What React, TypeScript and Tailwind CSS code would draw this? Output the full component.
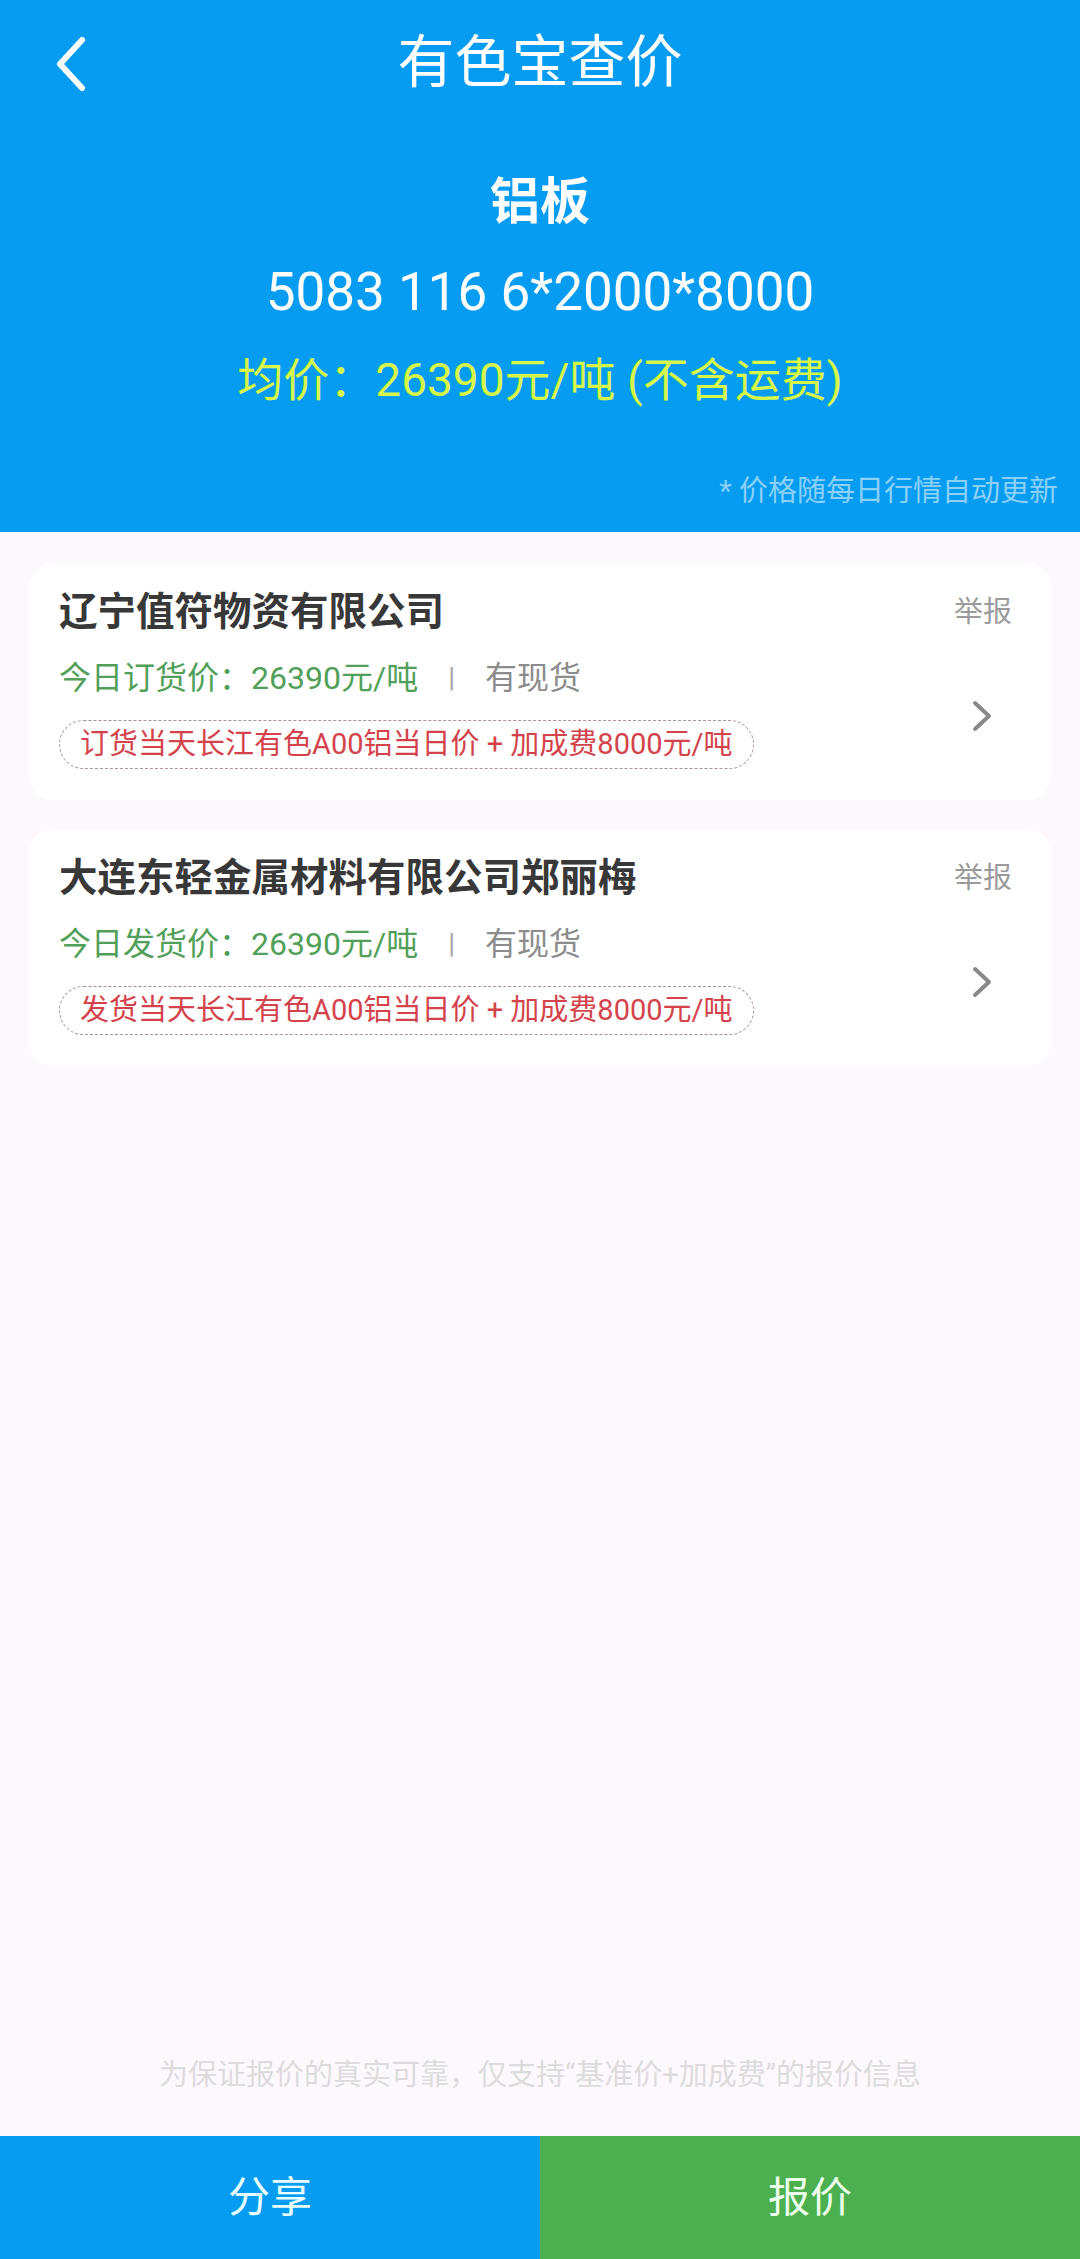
const FONT = "font-['Roboto','Noto_Sans_CJK_SC',sans-serif]";

type Offer = {
    id: number;
    company: string;
    priceLabel: string;
    price: string;
    stock: string;
    formula: string;
};

const offers: Offer[] = [
    {
        id: 1,
        company: "辽宁值符物资有限公司",
        priceLabel: "今日订货价：",
        price: "26390元/吨",
        stock: "有现货",
        formula: "订货当天长江有色A00铝当日价 + 加成费8000元/吨",
    },
    {
        id: 2,
        company: "大连东轻金属材料有限公司郑丽梅",
        priceLabel: "今日发货价：",
        price: "26390元/吨",
        stock: "有现货",
        formula: "发货当天长江有色A00铝当日价 + 加成费8000元/吨",
    },
];

const BackIcon = () => (
    <svg width="32" height="56" viewBox="0 0 32 56" fill="none">
        <path
            d="M27 4 L5 28 L27 52"
            stroke="#fff"
            strokeWidth="6"
            strokeLinecap="round"
            strokeLinejoin="round"
        />
    </svg>
);

const ChevronRight = () => (
    <svg width="20" height="32" viewBox="0 0 20 32" fill="none">
        <path
            d="M3 3 L17 16 L3 29"
            stroke="#8a8a8a"
            strokeWidth="4"
            strokeLinecap="round"
            strokeLinejoin="round"
        />
    </svg>
);

const OfferCard = ({ offer }: { offer: Offer }) => {
    return (
        <div className="mx-[29px] flex rounded-[24px] bg-white pt-[24px] pb-[31px] pl-[30px] pr-[39px]">
            <div className="flex flex-1 flex-col">
                <div className="text-[38.5px] leading-[50px] font-bold text-[#383838]">
                    {offer.company}
                </div>
                <div className="mt-[19px] flex items-center text-[32px] leading-[44px]">
                    <span className="text-[#519f58]">
                        {offer.priceLabel}
                        {offer.price}
                    </span>
                    <span className="mx-[30px] text-[28px] text-[#a5a5a5]">|</span>
                    <span className="text-[#8c8c8c]">{offer.stock}</span>
                </div>
                <div className="mt-[20px] flex">
                    <div className="flex h-[49px] items-center rounded-full border-[1.5px] border-dashed border-[#ae9294] px-[20px] text-[29px] text-[#d4434b]">
                        {offer.formula}
                    </div>
                </div>
            </div>
            <div className="flex flex-col items-center">
                <div className="text-[29px] leading-[50px] text-[#9b9b9b]">举报</div>
                <div className="mt-[63px] mr-[2px]">
                    <ChevronRight />
                </div>
            </div>
        </div>
    );
};

export default function App() {
    return (
        <div className={`${FONT} flex h-[2259px] w-[1080px] flex-col bg-[#fdf8fd]`}>
            <div className="flex h-[532px] flex-col bg-[#069cf1] text-white">
                <div className="grid h-[126px] grid-cols-[1fr_auto_1fr] items-center">
                    <div className="pl-[55px] pt-[2px]">
                        <BackIcon />
                    </div>
                    <div className="text-[57px] leading-[70px] font-normal">有色宝查价</div>
                    <div />
                </div>
                <div className="mt-[46px] text-center text-[50px] leading-[60px] font-bold">
                    铝板
                </div>
                <div className="mt-[30px] text-center text-[53px] leading-[60px]">
                    5083 116 6*2000*8000
                </div>
                <div className="mt-[28px] text-center text-[46px] leading-[60px] text-[#d6f64a]">
                    均价：26390元/吨 (不含运费)
                </div>
                <div className="mt-[63px] pr-[22px] text-right text-[29px] leading-[36px] text-[#8ad0f7]">
                    * 价格随每日行情自动更新
                </div>
            </div>
            <div className="flex flex-1 flex-col gap-[29px] pt-[31px]">
                {offers.map(o => (
                    <OfferCard key={o.id} offer={o} />
                ))}
            </div>
            <div className="pb-[41px] text-center text-[29px] leading-[40px] text-[#dcdcdc]">
                为保证报价的真实可靠，仅支持“基准价+加成费”的报价信息
            </div>
            <div className="flex h-[123px]">
                <div className="flex flex-1 items-center justify-center bg-[#069cf1] text-[42px] text-[#e6fcff]">
                    分享
                </div>
                <div className="flex flex-1 items-center justify-center bg-[#4caf50] text-[42px] text-[#ecffec]">
                    报价
                </div>
            </div>
        </div>
    );
}
